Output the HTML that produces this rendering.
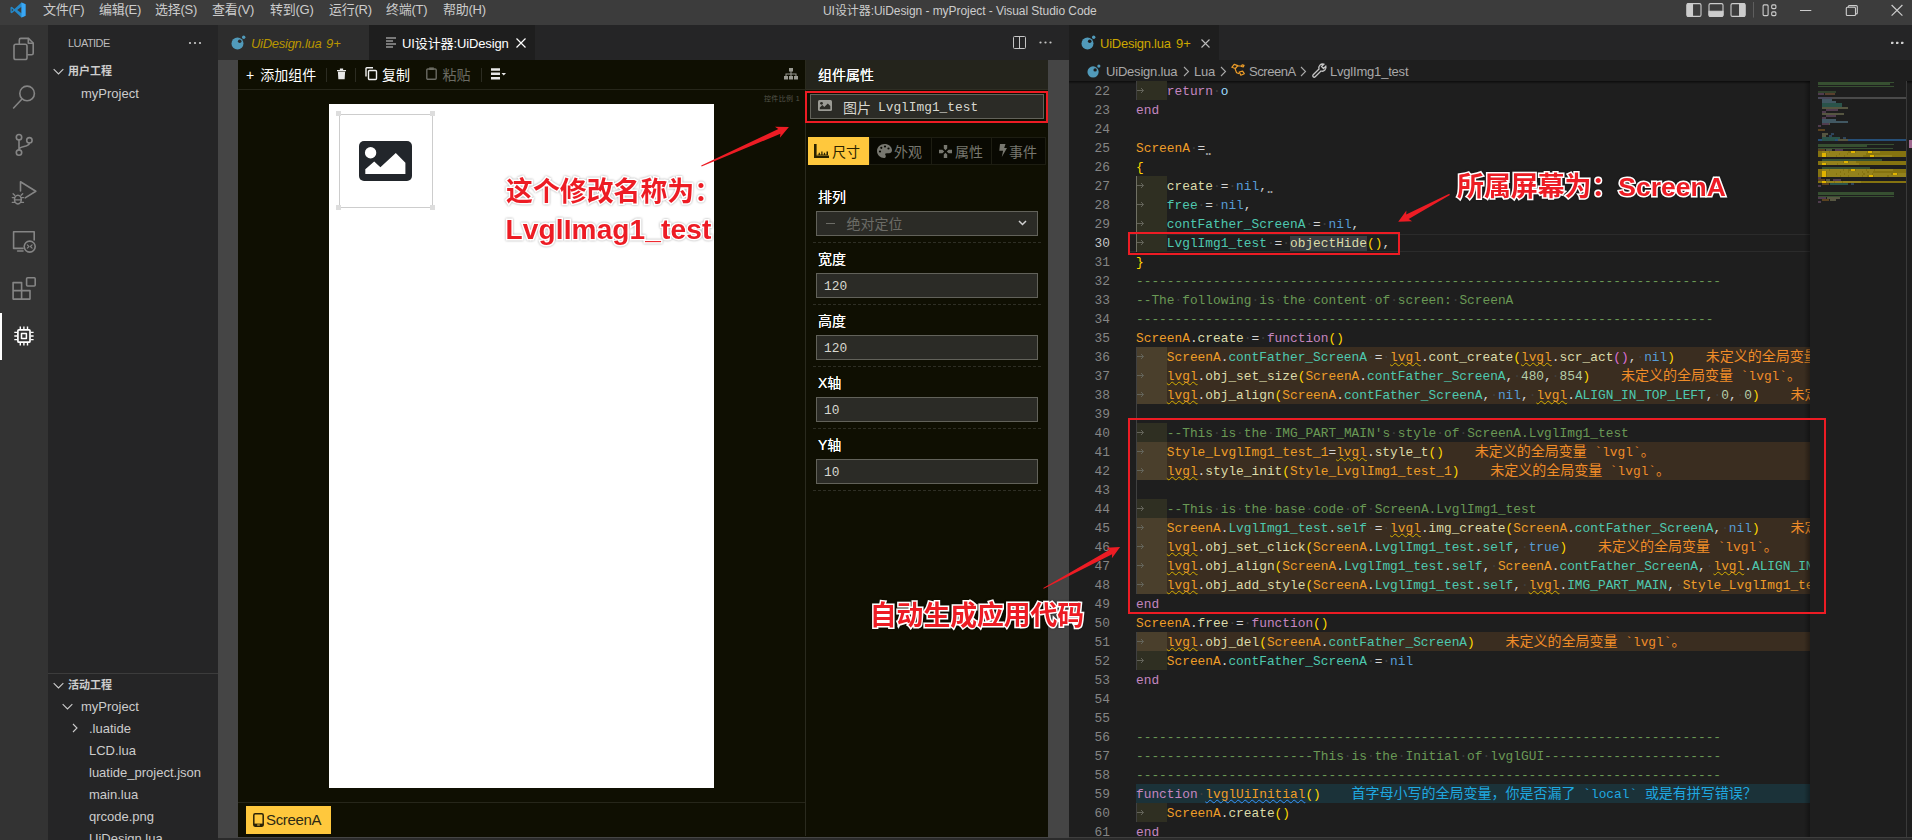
<!DOCTYPE html>
<html lang="zh-CN">
<head>
<meta charset="utf-8">
<title>UI设计器:UiDesign - myProject - Visual Studio Code</title>
<style>
*{box-sizing:border-box;margin:0;padding:0}
html,body{width:1912px;height:840px;overflow:hidden;background:#1e1e1e}
body{position:relative;font-family:"Liberation Sans","Noto Sans CJK SC",sans-serif;font-size:13px;color:#cccccc;-webkit-font-smoothing:antialiased}
.abs{position:absolute}
svg{position:absolute;overflow:visible}
.t{position:absolute;white-space:nowrap;line-height:1}
/* title bar */
#titlebar{left:0;top:0;width:1912px;height:25px;background:#3c3c3c}
#titlebar .m{top:3px;font-size:13px;color:#cccccc;letter-spacing:-.25px}
/* activity bar */
#activity{left:0;top:25px;width:48px;height:815px;background:#333333}
/* side bar */
#sidebar{left:48px;top:25px;width:170px;height:815px;background:#252526}
#sidebar .row{font-size:13px;color:#cccccc}
/* group 1 */
#g1tabs{left:218px;top:25px;width:851px;height:35px;background:#252526}
#web{left:218px;top:60px;width:851px;height:778px;background:#454545}
#designer{left:20px;top:0;width:810px;height:777px;background:#0f0f02}
/* group 2 */
#g2tabs{left:1069px;top:25px;width:843px;height:35px;background:#252526}
#crumbs{left:1069px;top:60px;width:843px;height:21px;background:#1e1e1e}
#editor{left:1069px;top:81px;width:843px;height:759px;background:#1e1e1e;overflow:hidden}
.ln{position:absolute;left:0;width:41px;text-align:right;font-family:"Liberation Mono",monospace;font-size:12.833px;line-height:21px;height:19px;color:#858585}
.cl{position:absolute;left:67px;height:19px;line-height:21px;white-space:pre;font-family:"Liberation Mono","Noto Sans CJK SC",monospace;font-size:12.833px;color:#d4d4d4}
.cl i{font-style:normal}
.cl b{font-weight:400;font-size:14px}
.ws{color:#3f3f3f}
.tw{color:#a0a0a0;font-size:12px;font-weight:700;letter-spacing:-.6px;position:relative;top:3px;left:0;font-family:"Liberation Sans",sans-serif}
.kw{color:#c586c0}.gl{color:#ee9d28}.fn{color:#dcdcaa}.nil{color:#569cd6}.fd{color:#4ec9b0}.lv{color:#9cdcfe}
.cm{color:#6a9955}.nu{color:#b5cea8}.b1{color:#ffd700}.b2{color:#da70d6}.pl{color:#d4d4d4}
.sq{text-decoration:underline wavy #d4ae00 1.2px;text-underline-offset:1px;text-decoration-skip-ink:none}
.sqb{text-decoration:underline wavy #3794ff 1.2px;text-underline-offset:1px;text-decoration-skip-ink:none}
.wl{position:absolute;left:67px;height:19px;background:#3a2d20}
.il{position:absolute;left:67px;height:19px;background:#1b3239}
.ind{position:absolute;left:67px;width:31px;height:19px;background:#2f2f22}
.indw{position:absolute;left:67px;width:31px;height:19px;background:#4a3f2c}
.arr{position:absolute;left:66px;width:12px;height:19px}
.wm{color:#f08c28}
.im{color:#1fa8e0}
/* annotations */
.ann{position:absolute;white-space:nowrap;font-family:"Liberation Sans","Noto Sans CJK SC",sans-serif;font-weight:700;font-size:26.5px;line-height:1;color:#ed1c24;-webkit-text-stroke:3px #ffffff;paint-order:stroke fill;filter:drop-shadow(0 0 1px rgba(0,0,0,.35))}
.rbox{position:absolute;border:2px solid #ed1c24}
</style>
</head>
<body>
<!-- ===== title bar ===== -->
<div id="titlebar" class="abs">
  <svg style="left:10px;top:2px" width="16" height="16" viewBox="0 0 100 100"><path d="M72 3 28 43 11 30 3 34v32l8 4 17-13 44 40 25-11V14zM72 30v40L45 50zM11 60V40l10 10z" fill="#2489ca" fill-rule="evenodd"/><path d="M72 3l25 11v72L72 97z" fill="#3aa7f5"/></svg>
  <span class="t m" style="left:43px">文件(F)</span>
  <span class="t m" style="left:99px">编辑(E)</span>
  <span class="t m" style="left:155px">选择(S)</span>
  <span class="t m" style="left:212px">查看(V)</span>
  <span class="t m" style="left:270px">转到(G)</span>
  <span class="t m" style="left:329px">运行(R)</span>
  <span class="t m" style="left:386px">终端(T)</span>
  <span class="t m" style="left:443px">帮助(H)</span>
  <span class="t" id="wtitle" style="left:823px;top:5px;font-size:12px;color:#cccccc;letter-spacing:-.06px">UI设计器:UiDesign - myProject - Visual Studio Code</span>
  <!-- layout controls -->
  <svg style="left:0;top:0" width="1912" height="25" viewBox="0 0 1912 25" fill="none" stroke="#cccccc" stroke-width="1.100">
    <rect x="1687" y="3.600" width="14" height="12.800" rx="1.500"/><path d="M1687 5.100a1.500 1.500 0 0 1 1.500-1.500H1692.500v12.800H1688.500a1.500 1.500 0 0 1-1.500-1.500z" fill="#cccccc"/>
    <rect x="1709" y="3.600" width="14" height="12.800" rx="1.500"/><path d="M1709 11.200h14v3.700a1.500 1.500 0 0 1-1.500 1.500h-11a1.500 1.500 0 0 1-1.500-1.500z" fill="#cccccc"/>
    <rect x="1731" y="3.600" width="14" height="12.800" rx="1.500"/><path d="M1739.600 3.600h3.900a1.500 1.500 0 0 1 1.500 1.500v9.800a1.500 1.500 0 0 1-1.500 1.500h-3.900z" fill="#cccccc"/>
    <path d="M1753.500 2v15.600" stroke="#5e5e5e" stroke-width="1"/>
    <rect x="1763.100" y="4.900" width="5" height="10.700" rx="1"/><rect x="1771.700" y="4.900" width="4.200" height="3.700" rx="1"/><rect x="1771.700" y="11.900" width="4.200" height="3.700" rx="1"/>
    <!-- window controls -->
    <path d="M1800 10.500h11.300" stroke-width="1"/>
    <rect x="1846.300" y="7.300" width="9.200" height="8.200" rx="1"/><path d="M1848.300 7.300V6.600a1 1 0 0 1 1-1h7a1 1 0 0 1 1 1v6.300a1 1 0 0 1-1 1h-.8"/>
    <path d="M1891.600 5l10.800 10.600M1902.400 5l-10.800 10.600" stroke-width="1.200"/>
  </svg>
</div>

<!-- ===== activity bar ===== -->
<div id="activity" class="abs">
  <div class="abs" style="left:0;top:288px;width:2px;height:47px;background:#ffffff"></div>
  <svg style="left:0;top:0" width="48" height="400" viewBox="0 25 48 400" fill="none" stroke="#858585" stroke-width="1.6" stroke-linejoin="round" stroke-linecap="round">
    <!-- explorer -->
    <path d="M19.3 43.5V40a1.6 1.6 0 0 1 1.600-1.600H28.500L33.200 43v10.200a1.600 1.600 0 0 1-1.600 1.600H27.800"/>
    <path d="M28.300 38.600V43.300H33"/>
    <rect x="14" y="44.300" width="13" height="15.200" rx="1.800"/>
    <!-- search -->
    <circle cx="27.100" cy="93.400" r="7.300"/>
    <path d="M21.800 99.200 13.600 108"/>
    <!-- scm -->
    <circle cx="19" cy="137.200" r="2.700"/>
    <circle cx="19" cy="152.600" r="2.700"/>
    <circle cx="29.400" cy="140.300" r="2.700"/>
    <path d="M19 140v9.800M29.400 143.100c0 4.800-10.400 2.200-10.400 6.700"/>
    <!-- debug -->
    <path d="M20.500 191V181.800L35.800 191.300 25.200 197.900"/>
    <ellipse cx="17.900" cy="199.600" rx="3.400" ry="4.300" stroke-width="1.500"/>
    <path d="M12.300 197.600h2.300M12.300 202.400h2.300M21.200 197.600h2.300M21.200 202.400h2.300M14.700 195.300l-1.600-1.600M21.100 195.300l1.600-1.600M14.600 199.800h6.600" stroke-width="1.300"/>
    <!-- remote -->
    <path d="M23 248.400H13.600V231.800H34.200V240"/>
    <path d="M17.600 251h5.400"/>
    <circle cx="29.700" cy="246.600" r="5.500"/>
    <path d="M27.300 244.800l1.700 1.700-1.700 1.700M32.100 244.800l-1.700 1.700 1.700 1.700" stroke-width="1.100"/>
    <!-- extensions -->
    <path d="M13.100 282.600h8.500v8h8.400v8.500H13.100zM13.100 290.600h8.500v8.500" />
    <rect x="26.600" y="277.800" width="8.600" height="8.200" rx="1"/>
    <!-- chip -->
    <g stroke="#ffffff">
      <rect x="17.900" y="329.800" width="12.100" height="12.400" rx="1" stroke-width="1.700"/>
      <rect x="21.500" y="333.600" width="4.900" height="4.900" stroke-width="1.500"/>
      <path d="M20.300 329.200v-2.800M23.900 329.200v-2.800M27.500 329.200v-2.800M20.300 345.500v-2.800M23.900 345.500v-2.800M27.500 345.500v-2.800M17.300 332.400h-3M17.300 336h-3M17.300 339.600h-3M33.600 332.400h-3M33.600 336h-3M33.600 339.600h-3" stroke-width="1.400" stroke-linecap="butt"/>
    </g>
  </svg>
</div>

<!-- ===== side bar ===== -->
<div id="sidebar" class="abs">
  <span class="t" style="left:20px;top:13px;font-size:11px;color:#bbbbbb;letter-spacing:-.55px">LUATIDE</span>
  <svg style="left:140px;top:16px" width="14" height="4" viewBox="0 0 14 4"><circle cx="2" cy="2" r="1.100" fill="#ccc"/><circle cx="7" cy="2" r="1.100" fill="#ccc"/><circle cx="12" cy="2" r="1.100" fill="#ccc"/></svg>
  <svg style="left:5px;top:41px" width="11" height="11" viewBox="0 0 10 10"><path d="M.6 2.800l4.400 4.400 4.400-4.400" fill="none" stroke="#ccc" stroke-width="1"/></svg>
  <span class="t" style="left:20px;top:41px;font-size:11px;font-weight:700;color:#cccccc">用户工程</span>
  <span class="t row" style="left:33px;top:62px">myProject</span>
  <div class="abs" style="left:0;top:648px;width:170px;height:1px;background:#3c3c3c"></div>
  <svg style="left:5px;top:655px" width="11" height="11" viewBox="0 0 10 10"><path d="M.6 2.800l4.400 4.400 4.400-4.400" fill="none" stroke="#ccc" stroke-width="1"/></svg>
  <span class="t" style="left:20px;top:655px;font-size:11px;font-weight:700;color:#cccccc">活动工程</span>
  <svg style="left:14px;top:676px" width="11" height="11" viewBox="0 0 10 10"><path d="M.6 2.800l4.400 4.400 4.400-4.400" fill="none" stroke="#ccc" stroke-width="1"/></svg>
  <span class="t row" style="left:33px;top:675px">myProject</span>
  <svg style="left:22px;top:698px" width="10" height="10" viewBox="0 0 10 10"><path d="M3 1l4 4-4 4" fill="none" stroke="#ccc" stroke-width="1.100"/></svg>
  <span class="t row" style="left:41px;top:697px">.luatide</span>
  <span class="t row" style="left:41px;top:719px">LCD.lua</span>
  <span class="t row" style="left:41px;top:741px">luatide_project.json</span>
  <span class="t row" style="left:41px;top:763px">main.lua</span>
  <span class="t row" style="left:41px;top:785px">qrcode.png</span>
  <span class="t row" style="left:41px;top:807px">UiDesign.lua</span>
</div>
<!-- ===== group 1 tabs ===== -->
<div id="g1tabs" class="abs">
  <div class="abs" style="left:0;top:0;width:151px;height:35px;background:#2d2d2d"></div>
  <svg style="left:13px;top:10px" width="15" height="15" viewBox="0 0 15 15"><circle cx="6.500" cy="8.500" r="6" fill="#519aba"/><circle cx="8.700" cy="6.300" r="1.800" fill="#2d2d2d"/><circle cx="12.700" cy="2.200" r="1.700" fill="#519aba"/></svg>
  <span class="t" style="left:33px;top:12px;font-size:13px;font-style:italic;color:#b89500;letter-spacing:-.27px">UiDesign.lua</span>
  <span class="t" style="left:108px;top:12px;font-size:13px;font-style:italic;color:#b89500">9+</span>
  <div class="abs" style="left:151px;top:0;width:166px;height:35px;background:#1e1e1e"></div>
  <svg style="left:168px;top:12px" width="11" height="11" viewBox="0 0 11 11"><path d="M0 1H10M0 4H7M0 7H10M0 10H7" stroke="#d4d4d4" stroke-width="1.200"/></svg>
  <span class="t" style="left:184px;top:12px;font-size:13px;color:#ffffff;letter-spacing:-.12px">UI设计器:UiDesign</span>
  <svg style="left:298px;top:13px" width="10" height="10" viewBox="0 0 10 10"><path d="M.5 .5l9 9M9.500 .5l-9 9" stroke="#ffffff" stroke-width="1.200"/></svg>
  <!-- actions -->
  <svg style="left:795px;top:11px" width="13" height="13" viewBox="0 0 13 13"><rect x=".5" y=".5" width="12" height="12" rx="1" fill="none" stroke="#c5c5c5"/><path d="M6.500 .5v12" stroke="#c5c5c5"/></svg>
  <svg style="left:821px;top:16px" width="13" height="3" viewBox="0 0 13 3"><circle cx="1.500" cy="1.500" r="1.100" fill="#c5c5c5"/><circle cx="6.500" cy="1.500" r="1.100" fill="#c5c5c5"/><circle cx="11.500" cy="1.500" r="1.100" fill="#c5c5c5"/></svg>
</div>

<!-- ===== webview ===== -->
<div id="web" class="abs">
 <div id="designer" class="abs">
  <!-- toolbar -->
  <div class="abs" style="left:0;top:29px;width:567px;height:1px;background:#26261a"></div>
  <span class="t" style="left:8px;top:8px;font-size:14px;color:#ffffff">+</span><span class="t" style="left:22.300px;top:8px;font-size:14px;color:#ffffff">添加组件</span>
  <div class="abs" style="left:88px;top:8px;width:1px;height:14px;background:#2c2c22"></div>
  <svg style="left:98.500px;top:8px" width="9" height="11.500" viewBox="0 0 10 12" preserveAspectRatio="none"><path d="M0 2h10v1.300H0zM3.200 .4h3.600v1.600H3.200zM1 3.800h8l-.5 8H1.500z" fill="#e8e8e8"/></svg>
  <div class="abs" style="left:117px;top:8px;width:1px;height:14px;background:#2c2c22"></div>
  <svg style="left:127px;top:7px" width="12" height="13" viewBox="0 0 12 13"><rect x="3.500" y="3.500" width="8" height="9" rx="1" fill="none" stroke="#f0f0f0" stroke-width="1.400"/><path d="M1 9.500V1.500a.8 .8 0 0 1 .8-.8H8" fill="none" stroke="#f0f0f0" stroke-width="1.400"/></svg>
  <span class="t" style="left:144px;top:8px;font-size:14px;color:#ffffff">复制</span>
  <svg style="left:188px;top:7px" width="11" height="13" viewBox="0 0 11 13"><rect x=".8" y="2" width="9.400" height="10.200" rx="1" fill="none" stroke="#6b6b63" stroke-width="1.400"/><rect x="3.200" y=".4" width="4.600" height="2.600" fill="#6b6b63"/></svg>
  <span class="t" style="left:204.500px;top:8px;font-size:14px;color:#6b6b63">粘贴</span>
  <div class="abs" style="left:243px;top:8px;width:1px;height:14px;background:#2c2c22"></div>
  <svg style="left:253px;top:8px" width="16" height="12" viewBox="0 0 16 12"><path d="M0 .3h9v2.400H0zM0 4.600h9V7H0zM0 9h9v2.400H0z" fill="#e8e8e8"/><path d="M10.500 5h4.500l-2.250 2.600z" fill="#e8e8e8"/></svg>
  <svg style="left:546px;top:8px" width="14" height="12" viewBox="0 0 14 12"><path d="M5 0h4v3.500H5zM0 8h4v3.500H0zM5 8h4v3.500H5zM10 8h4v3.500h-4zM6.500 3.500h1V6h-1zM1.500 5.500h11v1h-11zM1.500 6h1v2h-1zM11.500 6h1v2h-1zM6.500 6h1v2h-1z" fill="#9a9a92"/></svg>
  <span class="t" style="left:526px;top:35px;font-size:7px;color:#55554a;letter-spacing:.35px">控件比例 1</span>
  <!-- canvas -->
  <div class="abs" style="left:91px;top:44px;width:385px;height:684px;background:#ffffff"></div>
  <!-- selected image widget -->
  <div class="abs" style="left:100.500px;top:53.500px;width:94px;height:94px;border:1px solid #cdcdcd"></div>
  <div class="abs" style="left:98px;top:51px;width:5px;height:5px;background:#dddddd"></div>
  <div class="abs" style="left:192px;top:51px;width:5px;height:5px;background:#dddddd"></div>
  <div class="abs" style="left:98px;top:145px;width:5px;height:5px;background:#dddddd"></div>
  <div class="abs" style="left:192px;top:145px;width:5px;height:5px;background:#dddddd"></div>
  <svg style="left:121px;top:81px" width="53" height="40" viewBox="0 0 53 40"><rect x="0" y="0" width="53" height="40" rx="5" fill="#22262b"/><circle cx="11.600" cy="11.800" r="5.700" fill="#fff"/><path d="M6.300 33V28.300L15.200 20.600 21.400 26.300 36.800 12.100 46.400 21.700V33z" fill="#fff"/></svg>
  <!-- bottom bar -->
  <div class="abs" style="left:0;top:742px;width:567px;height:1px;background:#26261a"></div>
  <div class="abs" style="left:8px;top:746px;width:85px;height:28px;background:#ffc83d"></div>
  <svg style="left:15px;top:753px" width="11" height="14" viewBox="0 0 11 14"><rect x=".8" y=".8" width="9.400" height="12.400" rx="1.400" fill="none" stroke="#2a2208" stroke-width="1.500"/><rect x=".8" y="10.600" width="9.400" height="2.600" fill="#2a2208"/><rect x="4" y="11.500" width="3" height=".9" rx=".4" fill="#ffc83d"/></svg>
  <span class="t" style="left:28px;top:752px;font-size:15px;color:#2e2a14;letter-spacing:-.35px">ScreenA</span>

  <!-- properties panel -->
  <div class="abs" style="left:567px;top:0;width:1px;height:776px;background:#2a2a1e"></div>
  <div class="abs" style="left:568px;top:0;width:242px;height:29px;background:#24241c"></div>
  <div class="abs" style="left:568px;top:29px;width:242px;height:1px;background:#2e2e24"></div>
  <span class="t" style="left:580px;top:8px;font-size:14px;font-weight:400;color:#ffffff;text-shadow:0 0 .6px #ffffff">组件属性</span>
  <div class="abs" style="left:572px;top:34px;width:234px;height:25px;background:#2b2b26;border:1px solid #62625a"></div>
  <svg style="left:580px;top:40px" width="14" height="11" viewBox="0 0 14 11"><rect width="14" height="11" rx="1.500" fill="#9b9b95"/><circle cx="3.500" cy="3.300" r="1.400" fill="#2b2b26"/><path d="M1.800 9.200V7.500l2.500-2.500 2 2 3.500-3.500 2.500 2.500v3.200z" fill="#2b2b26"/></svg>
  <span class="t" style="left:605px;top:41px;font-size:14px;color:#d8d8d0">图片</span><span class="t" style="left:640px;top:42px;font-size:12.830px;color:#d8d8d0;font-family:'Liberation Mono',monospace">LvglImg1_test</span>
  <!-- prop tabs -->
  <div class="abs" style="left:570px;top:77px;width:61px;height:28px;background:#ffc83d"></div>
  <div class="abs" style="left:631px;top:77px;width:177px;height:28px;background:#090902;border:1px solid #1d1d12"></div>
  <div class="abs" style="left:693px;top:77px;width:1px;height:28px;background:#1d1d12"></div>
  <div class="abs" style="left:753px;top:77px;width:1px;height:28px;background:#1d1d12"></div>
  <svg style="left:576px;top:84px" width="15" height="14" viewBox="0 0 15 14"><path d="M0 0h2.600v11.400H15V14H0z" fill="#2a2200"/><path d="M3.500 10.500h1.200V8.800h1.200v1.700h1.400V7.600h1.200v2.900h1.400V8.800h1.200v1.700h1.400V7.600H14v3.600H3.500z" fill="#2a2200"/></svg>
  <span class="t" style="left:594px;top:85px;font-size:14px;color:#2a2200">尺寸</span>
  <svg style="left:639px;top:84px" width="15" height="14" viewBox="0 0 15 14"><path d="M7.500 0C3.400 0 0 3 0 7s3.400 7 7 7c1.300 0 1.800-.8 1.800-1.600 0-1.500-1.200-1.800-.4-2.800.9-1 6.600.9 6.600-3.400C15 2.600 11.600 0 7.500 0z" fill="#77776f"/><circle cx="3" cy="7.500" r="1.100" fill="#090902"/><circle cx="4.300" cy="3.800" r="1.100" fill="#090902"/><circle cx="8" cy="2.500" r="1.100" fill="#090902"/><circle cx="11.500" cy="4.500" r="1.100" fill="#090902"/></svg>
  <span class="t" style="left:656px;top:85px;font-size:14px;color:#77776f">外观</span>
  <svg style="left:701px;top:85px" width="13" height="13" viewBox="0 0 13 13"><path d="M4.800 0h3.400v3.400L6.500 5.200 4.800 3.400zM4.800 13h3.400V9.600L6.500 7.800 4.800 9.600zM0 4.800v3.400h3.400L5.200 6.500 3.400 4.800zM13 4.800v3.400H9.600L7.800 6.500l1.800-1.700z" fill="#77776f"/></svg>
  <span class="t" style="left:717px;top:85px;font-size:14px;color:#77776f">属性</span>
  <svg style="left:761px;top:84px" width="8" height="13" viewBox="0 0 8 13"><path d="M1 0h5.500L5.200 4H8L2.800 13l1.300-6.200H.3z" fill="#77776f"/></svg>
  <span class="t" style="left:771px;top:85px;font-size:14px;color:#77776f">事件</span>
  <!-- fields -->
  <span class="t" style="left:580px;top:130px;font-size:14px;font-weight:400;color:#ffffff;text-shadow:0 0 .6px #ffffff">排列</span>
  <div class="abs" style="left:578px;top:151px;width:222px;height:25px;background:#2b2b26;border:1px solid #62625a"></div>
  <div class="abs" style="left:588px;top:163px;width:9px;height:1px;background:#6c6c66"></div><span class="t" style="left:608.500px;top:157px;font-size:14px;color:#6c6c66">绝对定位</span>
  <svg style="left:780px;top:160px" width="9" height="6" viewBox="0 0 9 6"><path d="M1 1l3.500 3.500L8 1" fill="none" stroke="#d0d0d0" stroke-width="1.500"/></svg>
  <div class="abs" style="left:575px;top:182px;width:228px;height:0;border-top:1px dashed #2e2e24"></div>

  <span class="t" style="left:580px;top:192px;font-size:14px;font-weight:400;color:#ffffff;text-shadow:0 0 .6px #ffffff">宽度</span>
  <div class="abs" style="left:578px;top:213px;width:222px;height:25px;background:#2b2b26;border:1px solid #62625a"></div>
  <span class="t" style="left:586px;top:221px;font-size:12.830px;color:#d8d8d0;font-family:'Liberation Mono',monospace">120</span>
  <div class="abs" style="left:575px;top:244px;width:228px;height:0;border-top:1px dashed #2e2e24"></div>

  <span class="t" style="left:580px;top:254px;font-size:14px;font-weight:400;color:#ffffff;text-shadow:0 0 .6px #ffffff">高度</span>
  <div class="abs" style="left:578px;top:275px;width:222px;height:25px;background:#2b2b26;border:1px solid #62625a"></div>
  <span class="t" style="left:586px;top:283px;font-size:12.830px;color:#d8d8d0;font-family:'Liberation Mono',monospace">120</span>
  <div class="abs" style="left:575px;top:306px;width:228px;height:0;border-top:1px dashed #2e2e24"></div>

  <span class="t" style="left:580px;top:316px;font-size:14px;font-weight:400;color:#ffffff;text-shadow:0 0 .6px #ffffff">X轴</span>
  <div class="abs" style="left:578px;top:337px;width:222px;height:25px;background:#2b2b26;border:1px solid #62625a"></div>
  <span class="t" style="left:586px;top:345px;font-size:12.830px;color:#d8d8d0;font-family:'Liberation Mono',monospace">10</span>
  <div class="abs" style="left:575px;top:368px;width:228px;height:0;border-top:1px dashed #2e2e24"></div>

  <span class="t" style="left:580px;top:378px;font-size:14px;font-weight:400;color:#ffffff;text-shadow:0 0 .6px #ffffff">Y轴</span>
  <div class="abs" style="left:578px;top:399px;width:222px;height:25px;background:#2b2b26;border:1px solid #62625a"></div>
  <span class="t" style="left:586px;top:407px;font-size:12.830px;color:#d8d8d0;font-family:'Liberation Mono',monospace">10</span>
  <div class="abs" style="left:575px;top:430px;width:228px;height:0;border-top:1px dashed #2e2e24"></div>
 </div>
</div>
<!-- ===== group 2 tabs ===== -->
<div id="g2tabs" class="abs">
  <div class="abs" style="left:0;top:0;width:150px;height:35px;background:#1e1e1e"></div>
  <svg style="left:12px;top:10px" width="15" height="15" viewBox="0 0 15 15"><circle cx="6.500" cy="8.500" r="6" fill="#519aba"/><circle cx="8.700" cy="6.300" r="1.800" fill="#1e1e1e"/><circle cx="12.700" cy="2.200" r="1.700" fill="#519aba"/></svg>
  <span class="t" style="left:31px;top:12px;font-size:13px;color:#cca700;letter-spacing:-.25px">UiDesign.lua</span>
  <span class="t" style="left:107px;top:12px;font-size:13px;color:#cca700">9+</span>
  <svg style="left:132px;top:14px" width="9" height="9" viewBox="0 0 9 9"><path d="M.5 .5l8 8M8.500 .5l-8 8" stroke="#bbbbbb" stroke-width="1.100"/></svg>
  <svg style="left:822px;top:16px" width="13" height="4" viewBox="0 0 13 4"><rect x="0" y=".7" width="2.400" height="2.400" rx=".6" fill="#d0d0d0"/><rect x="5" y=".7" width="2.400" height="2.400" rx=".6" fill="#d0d0d0"/><rect x="10" y=".7" width="2.400" height="2.400" rx=".6" fill="#d0d0d0"/></svg>
</div>
<!-- ===== breadcrumbs ===== -->
<div id="crumbs" class="abs">
  <svg style="left:18px;top:4px" width="14" height="14" viewBox="0 0 15 15"><circle cx="6.500" cy="8.500" r="6" fill="#519aba"/><circle cx="8.700" cy="6.300" r="1.800" fill="#1e1e1e"/><circle cx="12.700" cy="2.200" r="1.700" fill="#519aba"/></svg>
  <span class="t" style="left:37px;top:5px;font-size:13px;color:#a9a9a9;letter-spacing:-.2px">UiDesign.lua</span>
  <svg style="left:114px;top:6px" width="7" height="11" viewBox="0 0 7 11"><path d="M1 1l4.500 4.500L1 10" fill="none" stroke="#a9a9a9" stroke-width="1.100"/></svg>
  <span class="t" style="left:125px;top:5px;font-size:13px;color:#a9a9a9;letter-spacing:-.2px">Lua</span>
  <svg style="left:151px;top:6px" width="7" height="11" viewBox="0 0 7 11"><path d="M1 1l4.500 4.500L1 10" fill="none" stroke="#a9a9a9" stroke-width="1.100"/></svg>
  <svg style="left:162px;top:3px" width="15" height="15" viewBox="0 0 15 15" fill="none" stroke="#ee9d28" stroke-width="1.200" stroke-linejoin="round"><path d="M.8 4.300l2.400-2.900 3.600 1.200-2.400 2.900z"/><path d="M6.600 3h4.600M4 5.600l1.600 4.200 2.600.8"/><path d="M8.200 9l3.400-.9 1.700 2.600-3.400 1.600z"/><path d="M11.200 1.800l1.800.6-.8 1.600-1.800-.6z"/></svg>
  <span class="t" style="left:180px;top:5px;font-size:13px;color:#a9a9a9;letter-spacing:-.45px">ScreenA</span>
  <svg style="left:231px;top:6px" width="7" height="11" viewBox="0 0 7 11"><path d="M1 1l4.500 4.500L1 10" fill="none" stroke="#a9a9a9" stroke-width="1.100"/></svg>
  <svg style="left:243px;top:3px" width="15" height="15" viewBox="0 0 15 15" fill="none" stroke="#c5c5c5" stroke-width="1.300"><path d="M13.800 3.200l-2.300 2.300-2-2L11.800 1.200A3.800 3.800 0 0 0 7 6L1.200 11.800a1.400 1.400 0 0 0 2 2L9 8a3.800 3.800 0 0 0 4.800-4.800z"/></svg>
  <span class="t" style="left:261px;top:5px;font-size:13px;color:#a9a9a9;letter-spacing:-.2px">LvglImg1_test</span>
</div>
<!-- ===== editor ===== -->
<div id="editor" class="abs">
  <div class="abs" style="left:0;top:0;width:843px;height:3px;background:linear-gradient(#0c0c0c,rgba(12,12,12,0))"></div>
  <!-- current line -->
  <div class="abs" style="left:59px;top:153px;width:682px;height:18px;border-top:1px solid #2b2b2b;border-bottom:1px solid #2b2b2b"></div>
  <div class="abs" id="codeclip" style="left:0;top:0;width:741px;height:758px;overflow:hidden">
<div class="ind" style="top:0px"></div>
<svg class="arr" style="top:0px" viewBox="0 0 12 19"><path d="M1.5 9.5H8.5M6 7l2.5 2.5L6 12" fill="none" stroke="#64645a" stroke-width="1"/></svg>
<div class="ind" style="top:95px"></div>
<svg class="arr" style="top:95px" viewBox="0 0 12 19"><path d="M1.5 9.5H8.5M6 7l2.5 2.5L6 12" fill="none" stroke="#64645a" stroke-width="1"/></svg>
<div class="ind" style="top:114px"></div>
<svg class="arr" style="top:114px" viewBox="0 0 12 19"><path d="M1.5 9.5H8.5M6 7l2.5 2.5L6 12" fill="none" stroke="#64645a" stroke-width="1"/></svg>
<div class="ind" style="top:133px"></div>
<svg class="arr" style="top:133px" viewBox="0 0 12 19"><path d="M1.5 9.5H8.5M6 7l2.5 2.5L6 12" fill="none" stroke="#64645a" stroke-width="1"/></svg>
<div class="ind" style="top:152px"></div>
<svg class="arr" style="top:152px" viewBox="0 0 12 19"><path d="M1.5 9.5H8.5M6 7l2.5 2.5L6 12" fill="none" stroke="#64645a" stroke-width="1"/></svg>
<div class="wl" style="top:266px;width:674px"></div>
<div class="indw" style="top:266px"></div>
<svg class="arr" style="top:266px" viewBox="0 0 12 19"><path d="M1.5 9.5H8.5M6 7l2.5 2.5L6 12" fill="none" stroke="#64645a" stroke-width="1"/></svg>
<div class="wl" style="top:285px;width:674px"></div>
<div class="indw" style="top:285px"></div>
<svg class="arr" style="top:285px" viewBox="0 0 12 19"><path d="M1.5 9.5H8.5M6 7l2.5 2.5L6 12" fill="none" stroke="#64645a" stroke-width="1"/></svg>
<div class="wl" style="top:304px;width:674px"></div>
<div class="indw" style="top:304px"></div>
<svg class="arr" style="top:304px" viewBox="0 0 12 19"><path d="M1.5 9.5H8.5M6 7l2.5 2.5L6 12" fill="none" stroke="#64645a" stroke-width="1"/></svg>
<div class="ind" style="top:342px"></div>
<svg class="arr" style="top:342px" viewBox="0 0 12 19"><path d="M1.5 9.5H8.5M6 7l2.5 2.5L6 12" fill="none" stroke="#64645a" stroke-width="1"/></svg>
<div class="wl" style="top:361px;width:674px"></div>
<div class="indw" style="top:361px"></div>
<svg class="arr" style="top:361px" viewBox="0 0 12 19"><path d="M1.5 9.5H8.5M6 7l2.5 2.5L6 12" fill="none" stroke="#64645a" stroke-width="1"/></svg>
<div class="wl" style="top:380px;width:674px"></div>
<div class="indw" style="top:380px"></div>
<svg class="arr" style="top:380px" viewBox="0 0 12 19"><path d="M1.5 9.5H8.5M6 7l2.5 2.5L6 12" fill="none" stroke="#64645a" stroke-width="1"/></svg>
<div class="ind" style="top:418px"></div>
<svg class="arr" style="top:418px" viewBox="0 0 12 19"><path d="M1.5 9.5H8.5M6 7l2.5 2.5L6 12" fill="none" stroke="#64645a" stroke-width="1"/></svg>
<div class="wl" style="top:437px;width:674px"></div>
<div class="indw" style="top:437px"></div>
<svg class="arr" style="top:437px" viewBox="0 0 12 19"><path d="M1.5 9.5H8.5M6 7l2.5 2.5L6 12" fill="none" stroke="#64645a" stroke-width="1"/></svg>
<div class="wl" style="top:456px;width:674px"></div>
<div class="indw" style="top:456px"></div>
<svg class="arr" style="top:456px" viewBox="0 0 12 19"><path d="M1.5 9.5H8.5M6 7l2.5 2.5L6 12" fill="none" stroke="#64645a" stroke-width="1"/></svg>
<div class="wl" style="top:475px;width:674px"></div>
<div class="indw" style="top:475px"></div>
<svg class="arr" style="top:475px" viewBox="0 0 12 19"><path d="M1.5 9.5H8.5M6 7l2.5 2.5L6 12" fill="none" stroke="#64645a" stroke-width="1"/></svg>
<div class="wl" style="top:494px;width:674px"></div>
<div class="indw" style="top:494px"></div>
<svg class="arr" style="top:494px" viewBox="0 0 12 19"><path d="M1.5 9.5H8.5M6 7l2.5 2.5L6 12" fill="none" stroke="#64645a" stroke-width="1"/></svg>
<div class="wl" style="top:551px;width:674px"></div>
<div class="indw" style="top:551px"></div>
<svg class="arr" style="top:551px" viewBox="0 0 12 19"><path d="M1.5 9.5H8.5M6 7l2.5 2.5L6 12" fill="none" stroke="#64645a" stroke-width="1"/></svg>
<div class="ind" style="top:570px"></div>
<svg class="arr" style="top:570px" viewBox="0 0 12 19"><path d="M1.5 9.5H8.5M6 7l2.5 2.5L6 12" fill="none" stroke="#64645a" stroke-width="1"/></svg>
<div class="il" style="top:703px;width:674px"></div>
<div class="ind" style="top:722px"></div>
<svg class="arr" style="top:722px" viewBox="0 0 12 19"><path d="M1.5 9.5H8.5M6 7l2.5 2.5L6 12" fill="none" stroke="#64645a" stroke-width="1"/></svg>
<div class="ln" style="top:0px">22</div>
<div class="cl" style="top:0px;left:97.8px"><i class="kw">return</i><i class="ws">·</i><i class="lv">o</i></div>
<div class="ln" style="top:19px">23</div>
<div class="cl" style="top:19px;left:67.0px"><i class="kw">end</i></div>
<div class="ln" style="top:38px">24</div>
<div class="ln" style="top:57px">25</div>
<div class="cl" style="top:57px;left:67.0px"><i class="gl">ScreenA</i><i class="ws">·</i><i class="pl">=</i><i class="tw">..</i></div>
<div class="ln" style="top:76px">26</div>
<div class="cl" style="top:76px;left:67.0px"><i class="b1">{</i></div>
<div class="ln" style="top:95px">27</div>
<div class="cl" style="top:95px;left:97.8px"><i class="fn">create</i><i class="ws">·</i><i class="pl">=</i><i class="ws">·</i><i class="nil">nil</i><i class="pl">,</i><i class="tw">..</i></div>
<div class="ln" style="top:114px">28</div>
<div class="cl" style="top:114px;left:97.8px"><i class="fd">free</i><i class="ws">·</i><i class="pl">=</i><i class="ws">·</i><i class="nil">nil</i><i class="pl">,</i></div>
<div class="ln" style="top:133px">29</div>
<div class="cl" style="top:133px;left:97.8px"><i class="fd">contFather_ScreenA</i><i class="ws">·</i><i class="pl">=</i><i class="ws">·</i><i class="nil">nil</i><i class="pl">,</i></div>
<div class="ln" style="top:152px;color:#c6c6c6">30</div>
<div class="cl" style="top:152px;left:97.8px"><i class="fd">LvglImg1_test</i><i class="ws">·</i><i class="pl">=</i><i class="ws">·</i><i class="fn" style="background:#3a3d41">objectHide</i><i class="b1">(</i><i class="b1">)</i><i class="pl">,</i></div>
<div class="ln" style="top:171px">31</div>
<div class="cl" style="top:171px;left:67.0px"><i class="b1">}</i></div>
<div class="ln" style="top:190px">32</div>
<div class="cl" style="top:190px;left:67.0px"><i class="cm">----------------------------------------------------------------------------</i></div>
<div class="ln" style="top:209px">33</div>
<div class="cl" style="top:209px;left:67.0px"><i class="cm">--The</i><i class="ws">·</i><i class="cm">following</i><i class="ws">·</i><i class="cm">is</i><i class="ws">·</i><i class="cm">the</i><i class="ws">·</i><i class="cm">content</i><i class="ws">·</i><i class="cm">of</i><i class="ws">·</i><i class="cm">screen:</i><i class="ws">·</i><i class="cm">ScreenA</i></div>
<div class="ln" style="top:228px">34</div>
<div class="cl" style="top:228px;left:67.0px"><i class="cm">---------------------------------------------------------------------------</i></div>
<div class="ln" style="top:247px">35</div>
<div class="cl" style="top:247px;left:67.0px"><i class="gl">ScreenA</i><i class="pl">.</i><i class="fn">create</i><i class="ws">·</i><i class="pl">=</i><i class="ws">·</i><i class="kw">function</i><i class="b1">(</i><i class="b1">)</i></div>
<div class="ln" style="top:266px">36</div>
<div class="cl" style="top:266px;left:97.8px"><i class="gl">ScreenA</i><i class="pl">.</i><i class="fd">contFather_ScreenA</i><i class="ws">·</i><i class="pl">=</i><i class="ws">·</i><i class="gl sq">lvgl</i><i class="pl">.</i><i class="fn">cont_create</i><i class="b1">(</i><i class="gl sq">lvgl</i><i class="pl">.</i><i class="fn">scr_act</i><i class="b2">(</i><i class="b2">)</i><i class="pl">,</i><i class="ws">·</i><i class="nil">nil</i><i class="b1">)</i><i class="wm">    <b>未定义的全局变量</b> `lvgl`<b>。</b></i></div>
<div class="ln" style="top:285px">37</div>
<div class="cl" style="top:285px;left:97.8px"><i class="gl sq">lvgl</i><i class="pl">.</i><i class="fn">obj_set_size</i><i class="b1">(</i><i class="gl">ScreenA</i><i class="pl">.</i><i class="fd">contFather_ScreenA</i><i class="pl">,</i><i class="ws">·</i><i class="nu">480</i><i class="pl">,</i><i class="ws">·</i><i class="nu">854</i><i class="b1">)</i><i class="wm">    <b>未定义的全局变量</b> `lvgl`<b>。</b></i></div>
<div class="ln" style="top:304px">38</div>
<div class="cl" style="top:304px;left:97.8px"><i class="gl sq">lvgl</i><i class="pl">.</i><i class="fn">obj_align</i><i class="b1">(</i><i class="gl">ScreenA</i><i class="pl">.</i><i class="fd">contFather_ScreenA</i><i class="pl">,</i><i class="ws">·</i><i class="nil">nil</i><i class="pl">,</i><i class="ws">·</i><i class="gl sq">lvgl</i><i class="pl">.</i><i class="fd">ALIGN_IN_TOP_LEFT</i><i class="pl">,</i><i class="ws">·</i><i class="nu">0</i><i class="pl">,</i><i class="ws">·</i><i class="nu">0</i><i class="b1">)</i><i class="wm">    <b>未定义的全局变量</b> `lvgl`<b>。</b></i></div>
<div class="ln" style="top:323px">39</div>
<div class="ln" style="top:342px">40</div>
<div class="cl" style="top:342px;left:97.8px"><i class="cm">--This</i><i class="ws">·</i><i class="cm">is</i><i class="ws">·</i><i class="cm">the</i><i class="ws">·</i><i class="cm">IMG_PART_MAIN's</i><i class="ws">·</i><i class="cm">style</i><i class="ws">·</i><i class="cm">of</i><i class="ws">·</i><i class="cm">ScreenA.LvglImg1_test</i></div>
<div class="ln" style="top:361px">41</div>
<div class="cl" style="top:361px;left:97.8px"><i class="gl">Style_LvglImg1_test_1</i><i class="pl">=</i><i class="gl sq">lvgl</i><i class="pl">.</i><i class="fn">style_t</i><i class="b1">(</i><i class="b1">)</i><i class="wm">    <b>未定义的全局变量</b> `lvgl`<b>。</b></i></div>
<div class="ln" style="top:380px">42</div>
<div class="cl" style="top:380px;left:97.8px"><i class="gl sq">lvgl</i><i class="pl">.</i><i class="fn">style_init</i><i class="b1">(</i><i class="gl">Style_LvglImg1_test_1</i><i class="b1">)</i><i class="wm">    <b>未定义的全局变量</b> `lvgl`<b>。</b></i></div>
<div class="ln" style="top:399px">43</div>
<div class="ln" style="top:418px">44</div>
<div class="cl" style="top:418px;left:97.8px"><i class="cm">--This</i><i class="ws">·</i><i class="cm">is</i><i class="ws">·</i><i class="cm">the</i><i class="ws">·</i><i class="cm">base</i><i class="ws">·</i><i class="cm">code</i><i class="ws">·</i><i class="cm">of</i><i class="ws">·</i><i class="cm">ScreenA.LvglImg1_test</i></div>
<div class="ln" style="top:437px">45</div>
<div class="cl" style="top:437px;left:97.8px"><i class="gl">ScreenA</i><i class="pl">.</i><i class="fd">LvglImg1_test</i><i class="pl">.</i><i class="fd">self</i><i class="ws">·</i><i class="pl">=</i><i class="ws">·</i><i class="gl sq">lvgl</i><i class="pl">.</i><i class="fn">img_create</i><i class="b1">(</i><i class="gl">ScreenA</i><i class="pl">.</i><i class="fd">contFather_ScreenA</i><i class="pl">,</i><i class="ws">·</i><i class="nil">nil</i><i class="b1">)</i><i class="wm">    <b>未定义的全局变量</b> `lvgl`<b>。</b></i></div>
<div class="ln" style="top:456px">46</div>
<div class="cl" style="top:456px;left:97.8px"><i class="gl sq">lvgl</i><i class="pl">.</i><i class="fn">obj_set_click</i><i class="b1">(</i><i class="gl">ScreenA</i><i class="pl">.</i><i class="fd">LvglImg1_test</i><i class="pl">.</i><i class="fd">self</i><i class="pl">,</i><i class="ws">·</i><i class="nil">true</i><i class="b1">)</i><i class="wm">    <b>未定义的全局变量</b> `lvgl`<b>。</b></i></div>
<div class="ln" style="top:475px">47</div>
<div class="cl" style="top:475px;left:97.8px"><i class="gl sq">lvgl</i><i class="pl">.</i><i class="fn">obj_align</i><i class="b1">(</i><i class="gl">ScreenA</i><i class="pl">.</i><i class="fd">LvglImg1_test</i><i class="pl">.</i><i class="fd">self</i><i class="pl">,</i><i class="ws">·</i><i class="gl">ScreenA</i><i class="pl">.</i><i class="fd">contFather_ScreenA</i><i class="pl">,</i><i class="ws">·</i><i class="gl sq">lvgl</i><i class="pl">.</i><i class="fd">ALIGN_IN_TOP_LEFT</i><i class="pl">,</i><i class="ws">·</i><i class="nu">10</i><i class="pl">,</i><i class="ws">·</i><i class="nu">10</i><i class="b1">)</i><i class="wm">    <b>未定义的全局变量</b> `lvgl`<b>。</b></i></div>
<div class="ln" style="top:494px">48</div>
<div class="cl" style="top:494px;left:97.8px"><i class="gl sq">lvgl</i><i class="pl">.</i><i class="fn">obj_add_style</i><i class="b1">(</i><i class="gl">ScreenA</i><i class="pl">.</i><i class="fd">LvglImg1_test</i><i class="pl">.</i><i class="fd">self</i><i class="pl">,</i><i class="ws">·</i><i class="gl sq">lvgl</i><i class="pl">.</i><i class="fd">IMG_PART_MAIN</i><i class="pl">,</i><i class="ws">·</i><i class="gl">Style_LvglImg1_test_1</i><i class="b1">)</i><i class="wm">    <b>未定义的全局变量</b> `lvgl`<b>。</b></i></div>
<div class="ln" style="top:513px">49</div>
<div class="cl" style="top:513px;left:67.0px"><i class="kw">end</i></div>
<div class="ln" style="top:532px">50</div>
<div class="cl" style="top:532px;left:67.0px"><i class="gl">ScreenA</i><i class="pl">.</i><i class="fn">free</i><i class="ws">·</i><i class="pl">=</i><i class="ws">·</i><i class="kw">function</i><i class="b1">(</i><i class="b1">)</i></div>
<div class="ln" style="top:551px">51</div>
<div class="cl" style="top:551px;left:97.8px"><i class="gl sq">lvgl</i><i class="pl">.</i><i class="fn">obj_del</i><i class="b1">(</i><i class="gl">ScreenA</i><i class="pl">.</i><i class="fd">contFather_ScreenA</i><i class="b1">)</i><i class="wm">    <b>未定义的全局变量</b> `lvgl`<b>。</b></i></div>
<div class="ln" style="top:570px">52</div>
<div class="cl" style="top:570px;left:97.8px"><i class="gl">ScreenA</i><i class="pl">.</i><i class="fd">contFather_ScreenA</i><i class="ws">·</i><i class="pl">=</i><i class="ws">·</i><i class="nil">nil</i></div>
<div class="ln" style="top:589px">53</div>
<div class="cl" style="top:589px;left:67.0px"><i class="kw">end</i></div>
<div class="ln" style="top:608px">54</div>
<div class="ln" style="top:627px">55</div>
<div class="ln" style="top:646px">56</div>
<div class="cl" style="top:646px;left:67.0px"><i class="cm">----------------------------------------------------------------------------</i></div>
<div class="ln" style="top:665px">57</div>
<div class="cl" style="top:665px;left:67.0px"><i class="cm">-----------------------This</i><i class="ws">·</i><i class="cm">is</i><i class="ws">·</i><i class="cm">the</i><i class="ws">·</i><i class="cm">Initial</i><i class="ws">·</i><i class="cm">of</i><i class="ws">·</i><i class="cm">lvglGUI-----------------------</i></div>
<div class="ln" style="top:684px">58</div>
<div class="cl" style="top:684px;left:67.0px"><i class="cm">----------------------------------------------------------------------------</i></div>
<div class="ln" style="top:703px">59</div>
<div class="cl" style="top:703px;left:67.0px"><i class="kw">function</i><i class="ws">·</i><i class="gl sqb">lvglUiInitial</i><i class="b1">(</i><i class="b1">)</i><i class="im">    <b>首字母小写的全局变量，你是否漏了</b> `local` <b>或是有拼写错误？</b></i></div>
<div class="ln" style="top:722px">60</div>
<div class="cl" style="top:722px;left:97.8px"><i class="gl">ScreenA</i><i class="pl">.</i><i class="fn">create</i><i class="b1">(</i><i class="b1">)</i></div>
<div class="ln" style="top:741px">61</div>
<div class="cl" style="top:741px;left:67.0px"><i class="kw">end</i></div>
  <!-- indent guides -->
  <div class="abs" style="left:67px;top:0;width:1px;height:19px;background:#404040"></div>
  <div class="abs" style="left:67px;top:95px;width:1px;height:76px;background:#707064"></div>
  <div class="abs" style="left:67px;top:266px;width:1px;height:247px;background:#404040"></div>
  <div class="abs" style="left:67px;top:551px;width:1px;height:38px;background:#404040"></div>
  <div class="abs" style="left:67px;top:722px;width:1px;height:19px;background:#404040"></div>
  </div>
  <div class="abs" style="left:735px;top:0;width:6px;height:759px;background:linear-gradient(90deg,rgba(0,0,0,0),rgba(0,0,0,.35))"></div>
  <!-- minimap -->
  <div id="minimap" class="abs" style="left:741px;top:0;width:96px;height:759px;background:#1e1e1e">
  <div class="abs" style="left:8px;top:16px;width:88px;height:2px;background:#4a4a4a"></div>
<div class="abs" style="left:8px;top:58px;width:88px;height:2px;background:#264f78"></div>
<div class="abs" style="left:8px;top:70px;width:88px;height:6px;background:#857310"></div>
<div class="abs" style="left:8px;top:80px;width:88px;height:4px;background:#857310"></div>
<div class="abs" style="left:8px;top:88px;width:88px;height:8px;background:#857310"></div>
<div class="abs" style="left:8px;top:100px;width:88px;height:2px;background:#857310"></div>
<div class="abs" style="left:8px;top:1px;width:76px;height:1px;background:#375031"></div>
<div class="abs" style="left:8px;top:2px;width:72px;height:2px;background:#375031"></div>
<div class="abs" style="left:8px;top:5px;width:76px;height:1px;background:#375031"></div>
<div class="abs" style="left:8px;top:10px;width:18px;height:2px;background:#32422d"></div>
<div class="abs" style="left:8px;top:12px;width:6px;height:2px;background:#503c4e"></div>
<div class="abs" style="left:15px;top:12px;width:10px;height:2px;background:#593f2d"></div>
<div class="abs" style="left:8px;top:16px;width:14px;height:2px;background:#484859"></div>
<div class="abs" style="left:12px;top:18px;width:10px;height:2px;background:#415762"></div>
<div class="abs" style="left:12px;top:20px;width:14px;height:2px;background:#415762"></div>
<div class="abs" style="left:12px;top:22px;width:20px;height:2px;background:#2a534a"></div>
<div class="abs" style="left:12px;top:24px;width:20px;height:2px;background:#2a534a"></div>
<div class="abs" style="left:12px;top:26px;width:26px;height:2px;background:#565641"></div>
<div class="abs" style="left:16px;top:28px;width:12px;height:2px;background:#503c4e"></div>
<div class="abs" style="left:12px;top:30px;width:4px;height:2px;background:#503c4e"></div>
<div class="abs" style="left:12px;top:32px;width:22px;height:2px;background:#565641"></div>
<div class="abs" style="left:16px;top:34px;width:10px;height:2px;background:#503c4e"></div>
<div class="abs" style="left:12px;top:36px;width:4px;height:2px;background:#503c4e"></div>
<div class="abs" style="left:12px;top:38px;width:14px;height:2px;background:#415762"></div>
<div class="abs" style="left:12px;top:40px;width:26px;height:2px;background:#415762"></div>
<div class="abs" style="left:12px;top:42px;width:8px;height:2px;background:#503c4e"></div>
<div class="abs" style="left:8px;top:44px;width:3px;height:2px;background:#503c4e"></div>
<div class="abs" style="left:12px;top:42px;width:6px;height:2px;background:#503c4e"></div>
<div class="abs" style="left:19px;top:42px;width:1px;height:2px;background:#565641"></div>
<div class="abs" style="left:8px;top:44px;width:3px;height:2px;background:#503c4e"></div>
<div class="abs" style="left:8px;top:48px;width:7px;height:2px;background:#5c4320"></div>
<div class="abs" style="left:12px;top:52px;width:6px;height:2px;background:#565641"></div>
<div class="abs" style="left:21px;top:52px;width:3px;height:2px;background:#2e455c"></div>
<div class="abs" style="left:12px;top:54px;width:4px;height:2px;background:#565641"></div>
<div class="abs" style="left:19px;top:54px;width:3px;height:2px;background:#2e455c"></div>
<div class="abs" style="left:12px;top:56px;width:18px;height:2px;background:#2a534a"></div>
<div class="abs" style="left:33px;top:56px;width:3px;height:2px;background:#2e455c"></div>
<div class="abs" style="left:12px;top:58px;width:13px;height:2px;background:#2a534a"></div>
<div class="abs" style="left:28px;top:58px;width:10px;height:2px;background:#565641"></div>
<div class="abs" style="left:8px;top:63px;width:76px;height:1px;background:#375031"></div>
<div class="abs" style="left:8px;top:64px;width:49px;height:2px;background:#375031"></div>
<div class="abs" style="left:8px;top:67px;width:75px;height:1px;background:#375031"></div>
<div class="abs" style="left:8px;top:68px;width:7px;height:2px;background:#5c4320"></div>
<div class="abs" style="left:16px;top:68px;width:6px;height:2px;background:#565641"></div>
<div class="abs" style="left:25px;top:68px;width:8px;height:2px;background:#503c4e"></div>
<div class="abs" style="left:12px;top:70px;width:7px;height:2px;background:#94821c"></div>
<div class="abs" style="left:20px;top:70px;width:18px;height:2px;background:#94821c"></div>
<div class="abs" style="left:41px;top:70px;width:4px;height:2px;background:#e0b400"></div>
<div class="abs" style="left:46px;top:70px;width:11px;height:2px;background:#94821c"></div>
<div class="abs" style="left:58px;top:70px;width:4px;height:2px;background:#e0b400"></div>
<div class="abs" style="left:63px;top:70px;width:7px;height:2px;background:#94821c"></div>
<div class="abs" style="left:12px;top:72px;width:4px;height:2px;background:#e0b400"></div>
<div class="abs" style="left:17px;top:72px;width:12px;height:2px;background:#94821c"></div>
<div class="abs" style="left:30px;top:72px;width:7px;height:2px;background:#94821c"></div>
<div class="abs" style="left:38px;top:72px;width:18px;height:2px;background:#94821c"></div>
<div class="abs" style="left:12px;top:74px;width:4px;height:2px;background:#e0b400"></div>
<div class="abs" style="left:17px;top:74px;width:9px;height:2px;background:#94821c"></div>
<div class="abs" style="left:27px;top:74px;width:7px;height:2px;background:#94821c"></div>
<div class="abs" style="left:35px;top:74px;width:18px;height:2px;background:#94821c"></div>
<div class="abs" style="left:60px;top:74px;width:4px;height:2px;background:#e0b400"></div>
<div class="abs" style="left:65px;top:74px;width:17px;height:2px;background:#94821c"></div>
<div class="abs" style="left:12px;top:78px;width:60px;height:2px;background:#375031"></div>
<div class="abs" style="left:12px;top:80px;width:21px;height:2px;background:#94821c"></div>
<div class="abs" style="left:34px;top:80px;width:4px;height:2px;background:#e0b400"></div>
<div class="abs" style="left:39px;top:80px;width:7px;height:2px;background:#94821c"></div>
<div class="abs" style="left:12px;top:82px;width:4px;height:2px;background:#e0b400"></div>
<div class="abs" style="left:17px;top:82px;width:10px;height:2px;background:#94821c"></div>
<div class="abs" style="left:28px;top:82px;width:21px;height:2px;background:#94821c"></div>
<div class="abs" style="left:12px;top:86px;width:48px;height:2px;background:#375031"></div>
<div class="abs" style="left:12px;top:88px;width:7px;height:2px;background:#94821c"></div>
<div class="abs" style="left:20px;top:88px;width:13px;height:2px;background:#94821c"></div>
<div class="abs" style="left:34px;top:88px;width:4px;height:2px;background:#94821c"></div>
<div class="abs" style="left:41px;top:88px;width:4px;height:2px;background:#e0b400"></div>
<div class="abs" style="left:46px;top:88px;width:10px;height:2px;background:#94821c"></div>
<div class="abs" style="left:57px;top:88px;width:7px;height:2px;background:#94821c"></div>
<div class="abs" style="left:65px;top:88px;width:18px;height:2px;background:#94821c"></div>
<div class="abs" style="left:12px;top:90px;width:4px;height:2px;background:#e0b400"></div>
<div class="abs" style="left:17px;top:90px;width:13px;height:2px;background:#94821c"></div>
<div class="abs" style="left:31px;top:90px;width:7px;height:2px;background:#94821c"></div>
<div class="abs" style="left:39px;top:90px;width:13px;height:2px;background:#94821c"></div>
<div class="abs" style="left:53px;top:90px;width:4px;height:2px;background:#94821c"></div>
<div class="abs" style="left:59px;top:90px;width:4px;height:2px;background:#94821c"></div>
<div class="abs" style="left:12px;top:92px;width:4px;height:2px;background:#e0b400"></div>
<div class="abs" style="left:17px;top:92px;width:9px;height:2px;background:#94821c"></div>
<div class="abs" style="left:27px;top:92px;width:7px;height:2px;background:#94821c"></div>
<div class="abs" style="left:35px;top:92px;width:13px;height:2px;background:#94821c"></div>
<div class="abs" style="left:49px;top:92px;width:4px;height:2px;background:#94821c"></div>
<div class="abs" style="left:55px;top:92px;width:7px;height:2px;background:#94821c"></div>
<div class="abs" style="left:63px;top:92px;width:18px;height:2px;background:#94821c"></div>
<div class="abs" style="left:83px;top:92px;width:4px;height:2px;background:#e0b400"></div>
<div class="abs" style="left:88px;top:92px;width:8px;height:2px;background:#94821c"></div>
<div class="abs" style="left:12px;top:94px;width:4px;height:2px;background:#e0b400"></div>
<div class="abs" style="left:17px;top:94px;width:13px;height:2px;background:#94821c"></div>
<div class="abs" style="left:31px;top:94px;width:7px;height:2px;background:#94821c"></div>
<div class="abs" style="left:39px;top:94px;width:13px;height:2px;background:#94821c"></div>
<div class="abs" style="left:53px;top:94px;width:4px;height:2px;background:#94821c"></div>
<div class="abs" style="left:59px;top:94px;width:4px;height:2px;background:#e0b400"></div>
<div class="abs" style="left:64px;top:94px;width:13px;height:2px;background:#94821c"></div>
<div class="abs" style="left:79px;top:94px;width:17px;height:2px;background:#94821c"></div>
<div class="abs" style="left:8px;top:96px;width:3px;height:2px;background:#503c4e"></div>
<div class="abs" style="left:8px;top:98px;width:7px;height:2px;background:#5c4320"></div>
<div class="abs" style="left:16px;top:98px;width:4px;height:2px;background:#565641"></div>
<div class="abs" style="left:23px;top:98px;width:8px;height:2px;background:#503c4e"></div>
<div class="abs" style="left:12px;top:100px;width:4px;height:2px;background:#e0b400"></div>
<div class="abs" style="left:17px;top:100px;width:7px;height:2px;background:#94821c"></div>
<div class="abs" style="left:25px;top:100px;width:7px;height:2px;background:#94821c"></div>
<div class="abs" style="left:33px;top:100px;width:18px;height:2px;background:#94821c"></div>
<div class="abs" style="left:12px;top:102px;width:7px;height:2px;background:#5c4320"></div>
<div class="abs" style="left:20px;top:102px;width:18px;height:2px;background:#2a534a"></div>
<div class="abs" style="left:41px;top:102px;width:3px;height:2px;background:#2e455c"></div>
<div class="abs" style="left:8px;top:104px;width:3px;height:2px;background:#503c4e"></div>
<div class="abs" style="left:8px;top:111px;width:76px;height:1px;background:#375031"></div>
<div class="abs" style="left:8px;top:112px;width:76px;height:2px;background:#375031"></div>
<div class="abs" style="left:8px;top:115px;width:76px;height:1px;background:#375031"></div>
<div class="abs" style="left:8px;top:116px;width:8px;height:2px;background:#503c4e"></div>
<div class="abs" style="left:17px;top:116px;width:13px;height:2px;background:#565641"></div>
<div class="abs" style="left:12px;top:118px;width:7px;height:2px;background:#5c4320"></div>
<div class="abs" style="left:20px;top:118px;width:6px;height:2px;background:#565641"></div>
<div class="abs" style="left:8px;top:120px;width:3px;height:2px;background:#503c4e"></div>
  </div>
  <div class="abs" style="left:837px;top:0;width:1px;height:759px;background:#3a3a3a"></div>
  <div class="abs" style="left:840px;top:59px;width:3px;height:8px;background:#a06a90"></div>
</div>
<!-- bottom strip -->
<div class="abs" style="left:218px;top:838px;width:1694px;height:2px;background:#2b2b2b"></div>
<div class="abs" style="left:1069px;top:836.700px;width:843px;height:1.300px;background:#3e3e3e"></div>

<!-- ===== annotations ===== -->
<div class="rbox" style="left:805px;top:91px;width:243px;height:32px"></div>
<div class="rbox" style="left:1128px;top:232px;width:272px;height:23px"></div>
<div class="rbox" style="left:1128px;top:418px;width:698px;height:196px"></div>
<svg style="left:0;top:0" width="1912" height="840" viewBox="0 0 1912 840">
  <g fill="#ed1c24">
  <polygon points="701.6,166.6 780.4,133.7 779.9,137.7 788.9,127.1 775.0,126.7 778.3,129.0 701.2,165.6"/>
  <polygon points="1449.3,193.7 1406.2,214.6 1406.4,210.6 1398.2,221.8 1412.1,221.2 1408.7,219.1 1449.9,194.9"/>
  <polygon points="1043.7,588.7 1112.1,554.3 1111.9,558.2 1120.1,547.0 1106.2,547.7 1109.6,549.7 1043.3,587.9"/>
  </g>
</svg>
<span class="ann" style="left:506px;top:178.500px;font-size:26.9px">这个修改名称为：</span>
<span class="ann" style="left:505.500px;top:215.500px;font-size:28px;letter-spacing:.15px">LvglImag1_test</span>
<span class="ann" style="left:1457px;top:174px;font-size:26.9px">所属屏幕为：<span style="font-size:26.500px">ScreenA</span></span>
<span class="ann" style="left:869.800px;top:602.500px;font-size:26.8px">自动生成应用代码</span>
</body>
</html>
